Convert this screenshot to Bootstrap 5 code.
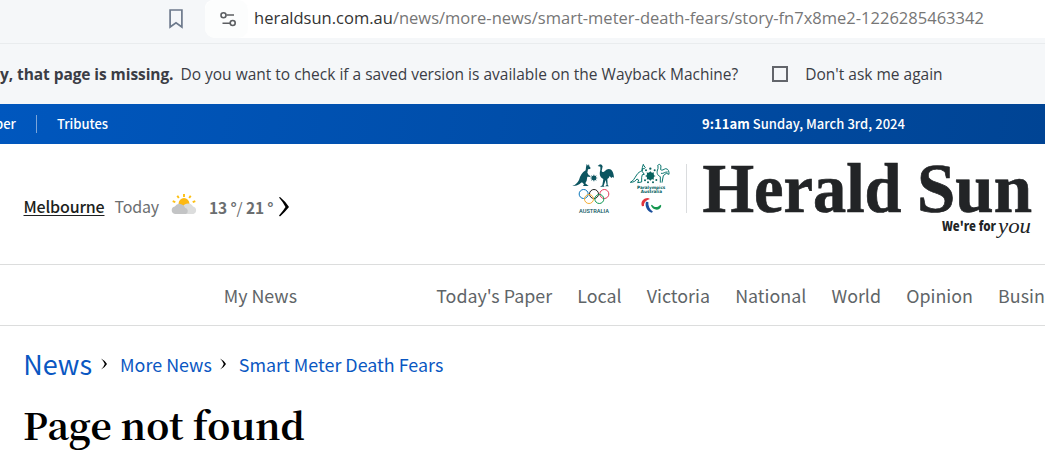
<!DOCTYPE html>
<html lang="en">
<head>
<meta charset="utf-8">
<meta name="viewport" content="width=device-width, initial-scale=1">
<title>Page not found | Herald Sun</title>
<link href="https://cdn.jsdelivr.net/npm/bootstrap@5.3.0/dist/css/bootstrap.min.css" rel="stylesheet">
<style>
  body { height: 457px; overflow: hidden; background: #fff; font-family: "Noto Sans CJK SC", "Noto Sans", sans-serif; color: #000; line-height: 24px; }
  a { text-decoration: none; color: inherit; }
  svg { display: block; flex: none; }
  .chrome-top { height: 43px; background: #f5f7f9; font-family: "Open Sans", "Noto Sans", sans-serif; }
  .bookmark { margin: 9px 0 0 169px; }
  .address { margin-left: 22px; height: 38px; background: #fff; border-bottom-left-radius: 10px; border-top-left-radius: 8px; }
  .site-btn { width: 43px; height: 38px; background: #fcfdfd; border-radius: 10px; }
  .url { margin: 6px 0 0 6px; font-size: 16.5px; color: #767676; letter-spacing: .01px; }
  .url .host { color: #333; }
  .infobar { height: 61px; background: #f5f7f9; border-top: 1px solid #e9ecee; font: 15.5px/24px "Open Sans", "Noto Sans", sans-serif; color: #3b3d45; }
  .infobar strong { letter-spacing: -.08px; margin-right: 7px; }
  .tick-box { width: 16px; height: 16px; border: 2px solid #62656b; margin: 0 17px 0 34px; flex: none; }
  .utility { height: 40px; background: linear-gradient(100deg, #0057be, #004494); color: #fff; font-size: 13px; font-weight: 500; }
  .utility .cut { margin-left: -5px; }
  .utility .rule { width: 1px; height: 18px; background: #7ba5da; margin: 0 20px; }
  .utility .today { margin-right: 140px; letter-spacing: .04px; }
  .mast { height: 120px; }
  .weather { margin: 50px 0 0 23.5px; font-size: 16px; color: #6b6e70; letter-spacing: -.17px; }
  .city { color: #1d1f20; font-weight: 500; text-decoration: underline; text-underline-offset: 2px; text-decoration-thickness: 1px; margin-right: 10px; }
  .temps { margin: 1px 6px 0 8px; font-size: 15.5px; letter-spacing: -.13px; }
  .temps span { font-weight: 400; }
  .sections { height: 62px; border-top: 1px solid #dcdddd; border-bottom: 1px solid #dcdddd; font-size: 17.85px; color: #5f6568; gap: 25.2px; padding: 0 0 0 223.7px; }
  .sections .first { margin-right: 114px; }
  .crumbs { color: #0a57c2; height: 40px; margin: 18px 0 0 23.2px; font-size: 17.9px; }
  .crumbs .top { font-size: 27px; }
  h1.title { font: 700 37px/46px "Noto Serif CJK SC", "Noto Serif", "Liberation Serif", serif; margin: 17px 0 0 23px; }
</style>
</head>
<body>
<header class="chrome-top d-flex">
  <svg class="bookmark" width="14" height="20" viewBox="0 0 14 20" fill="none" stroke="#6d7a8c" stroke-width="1.7"><path d="M1.1 1h11.8v17L7 13.9 1.1 18z"/></svg>
  <div class="address d-flex flex-fill">
    <div class="site-btn"><svg width="43" height="38" fill="none" stroke="#5c5f62" stroke-width="1.6"><circle cx="18.500" cy="15.2" r="2.5"/><path d="M21.500 15h7.500M17.500 23.2h7.500"/><circle cx="27.700" cy="23" r="2.5"/></svg></div>
    <div class="url text-nowrap"><span class="host">heraldsun.com.au</span>/news/more-news/smart-meter-death-fears/story-fn7x8me2-1226285463342</div>
  </div>
</header>
<div class="infobar d-flex align-items-center text-nowrap">
  <strong>y, that page is missing.</strong><span>Do you want to check if a saved version is available on the Wayback Machine?</span>
  <span class="tick-box"></span><span>Don't ask me again</span>
</div>
<div class="utility d-flex align-items-center text-nowrap">
  <a href="#" class="cut">per</a><span class="rule"></span><a href="#">Tributes</a>
  <span class="today ms-auto"><b>9:11am</b> Sunday, March 3rd, 2024</span>
</div>
<div class="mast d-flex align-items-start text-nowrap">
  <div class="weather d-flex">
    <a href="#" class="city">Melbourne</a><span>Today</span>
    <svg class="ms-2" width="34" height="28" viewBox="0 0 34 28">
      <g stroke="#fdc012" stroke-width="1.9"><path d="M17 0v3M10.3 1.800l1.5 2.3M23.7 1.800l-1.5 2.3M5.700 7.200l2.6 1M28.300 7.200l-2.6 1"/></g>
      <circle cx="17" cy="9.500" r="5.4" fill="#fdb913"/>
      <path d="M15 20a4 4 0 0 1 1-7.800a5.800 5.800 0 0 1 10 .3a3.900 3.900 0 0 1 .5 7.500z" fill="#dcdddd"/>
      <path d="M8 20a3.800 3.800 0 0 1-.2-7.500a5.700 5.700 0 0 1 10.200 1.200a3.300 3.300 0 0 1 .8 6.300z" fill="#c3c4c5"/>
    </svg>
    <b class="temps">13 °<span>/</span> 21 °</b>
    <svg width="11" height="24" viewBox="0 0 11 24"><path d="M1 3Q6 7 10 13Q6 18 1 22.500L0 21.500Q4 17 6.500 13Q4 8 0 3.500z"/></svg>
  </div>
  <svg class="ms-auto" width="477" height="120" viewBox="568 144 477 120">
    <g transform="translate(560 150) scale(.3333)">
      <g fill="#0c5560">
        <path d="M80 42l4 5 3-5 1 7 4 5-2 3-6 1-2 10 4 7 5 3 0 3-6-1-3 0-2 12-4 8 7 6 3 2-17 0 3-5-6-6c-7 4-11 12-29 11c11-3 15-10 20-18c4-14 9-22 20-29l1-9z"/>
        <path d="M113 48l7-5 5 1 3 5-3 14c2 6 7 3 14-4c12-7 22 2 23 24l-5-2-3 3-5-6-3 6-4 3 1 18 4 4-12 0 5-4-3-15-6 17 3 3-14 0 7-4 3-19c-10-6-13-14-9-28l0-9z"/>
        <circle cx="102" cy="83" r="6"/><path d="M102 73l2 6 6-3-3 6 6 2-6 2 3 6-6-3-2 6-3-6-6 3 3-6-6-2 6-2-3-6 6 3z"/>
      </g>
      <g fill="none" stroke-width="3"><circle cx="71" cy="132" r="13.500" stroke="#0873b8"/><circle cx="102" cy="132" r="13.500" stroke="#222"/><circle cx="133" cy="132" r="13.500" stroke="#e23b59"/><circle cx="87" cy="147" r="13.500" stroke="#f3ac32"/><circle cx="118" cy="147" r="13.500" stroke="#0a9750"/></g>
      <text x="57" y="188" textLength="90" lengthAdjust="spacingAndGlyphs" font-family="Roboto, sans-serif" font-weight="500" font-size="17" fill="#0c5560">AUSTRALIA</text>
      <g fill="none" stroke="#08736c" stroke-width="3" stroke-linejoin="round">
        <path d="M250 43l2 5 4 4-3 4-6 0 0 9 6 8-6 1-2 8 0 14-12 2 3-8-5-3c-4 5-8 10-20 10c9-4 13-13 19-22c4-7 10-10 16-13l1-9z"/>
        <path d="M292 47l6-4 5 4-1 12c4 4 9-1 15-3c8 0 11 9 10 17l-8-3-9 7-4 21M301 98l0-18c-10-4-12-13-7-24l0-8"/><path d="M303 70c8 2 11-5 20-4"/>
      </g>
      <g fill="#08625f"><circle cx="271" cy="78" r="11"/><path d="M271 63l3 7 8-3-2 8 7 3-7 3 2 8-8-3-3 7-4-7-7 3 2-8-7-3 7-3-2-8 7 3z"/><circle cx="271" cy="56" r="3.500"/><circle cx="284" cy="61" r="3"/><circle cx="258" cy="61" r="3"/><circle cx="255" cy="91" r="3"/><circle cx="264" cy="97" r="3"/><circle cx="279" cy="97" r="3"/><circle cx="289" cy="90" r="3"/>
        <text x="231" y="116" textLength="85" lengthAdjust="spacingAndGlyphs" font-family="DejaVu Sans, sans-serif" font-weight="700" font-size="13">Paralympics</text>
        <text x="242" y="129" textLength="64" lengthAdjust="spacingAndGlyphs" font-family="DejaVu Sans, sans-serif" font-weight="700" font-size="13">Australia</text></g>
      <path d="M246 169c-5-13 2-24 18-25l6 3c-11 3-19 10-18 21z" fill="#e2343c"/>
      <path d="M258 155c-4 14 3 28 17 33l4-3c-10-7-15-17-14-29z" fill="#1c4f9c"/>
      <path d="M273 166c3 14 27 20 31 1l-3-3c-7 9-18 10-25 0z" fill="#14964e"/>
    </g>
    <path d="M686.500 164v49" stroke="#dadcde"/>
    <g fill="#222426">
      <g font-family="Liberation Serif, serif" font-weight="700" font-size="70.500" stroke="#222426" stroke-width=".7">
        <text x="702.500" y="211.500" textLength="199" lengthAdjust="spacingAndGlyphs">Herald</text>
        <text x="917" y="211.500" textLength="115" lengthAdjust="spacingAndGlyphs">Sun</text>
      </g>
      <text x="942" y="231" textLength="54" lengthAdjust="spacingAndGlyphs" font-family="Noto Sans CJK SC, sans-serif" font-weight="900" font-size="13.500">We're for</text>
      <text x="998" y="233" textLength="33" lengthAdjust="spacingAndGlyphs" font-family="Liberation Serif, serif" font-style="italic" font-size="20">you</text>
    </g>
  </svg>
</div>
<nav class="sections d-flex align-items-center text-nowrap">
  <a href="#" class="first">My News</a><a href="#">Today's Paper</a><a href="#">Local</a><a href="#">Victoria</a><a href="#">National</a><a href="#">World</a><a href="#">Opinion</a><a href="#">Business</a>
</nav>
<main>
  <div class="crumbs d-flex align-items-center text-nowrap">
    <a href="#" class="top">News</a>
    <svg width="28" height="14" viewBox="0 0 28 14"><path d="M9 1.500Q13 3.500 15 7Q13 10.500 9 12.500Q12 9.500 12.800 7Q12 4.500 9 1.500z"/></svg>
    <a href="#">More News</a>
    <svg width="27" height="14" viewBox="0 0 27 14"><path d="M8 1.500Q12 3.500 14 7Q12 10.500 8 12.500Q11 9.500 11.800 7Q11 4.500 8 1.500z"/></svg>
    <a href="#">Smart Meter Death Fears</a>
  </div>
  <h1 class="title">Page not found</h1>
</main>
<script src="https://cdn.jsdelivr.net/npm/bootstrap@5.3.0/dist/js/bootstrap.bundle.min.js"></script>
</body>
</html>
